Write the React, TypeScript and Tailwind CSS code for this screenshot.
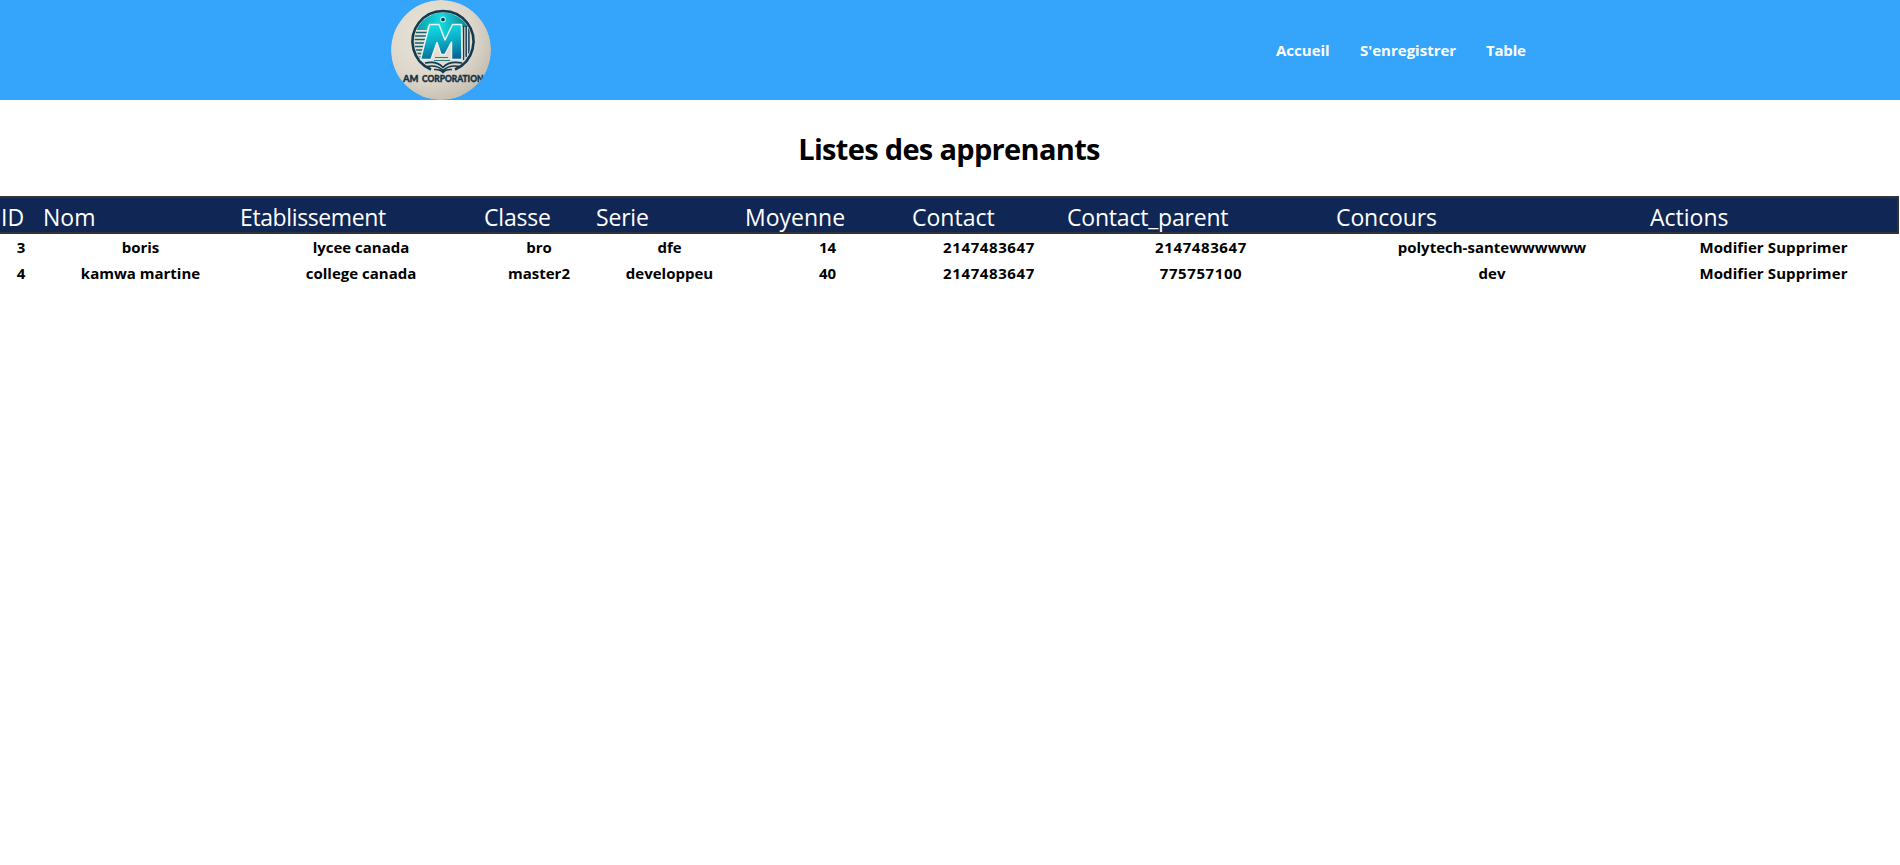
import React from "react";

const columns = [
  { label: "ID", cls: "w-[42px]" },
  { label: "Nom", cls: "w-[197px]" },
  { label: "Etablissement", cls: "w-[244px] tracking-[-0.38px]" },
  { label: "Classe", cls: "w-[112px] tracking-[-0.2px]" },
  { label: "Serie", cls: "w-[149px] tracking-[-0.2px]" },
  { label: "Moyenne", cls: "w-[167px]" },
  { label: "Contact", cls: "w-[155px]" },
  { label: "Contact_parent", cls: "w-[269px] tracking-[-0.2px]" },
  { label: "Concours", cls: "w-[314px] tracking-[-0.1px]" },
  { label: "Actions", cls: "w-[249px]" },
];

const rows = [
  ["3", "boris", "lycee canada", "bro", "dfe", "14", "2147483647", "2147483647", "polytech-santewwwwww"],
  ["4", "kamwa martine", "college canada", "master2", "developpeu", "40", "2147483647", "775757100", "dev"],
];

function Logo() {
  return (
    <svg viewBox="0 0 100 100" className="block size-[100px] rounded-full" role="img" aria-label="AM Corporation">
      <defs>
        <radialGradient id="paper" cx=".38" cy=".35" r=".75">
          <stop offset="0" stopColor="#e9e4da" />
          <stop offset=".6" stopColor="#ddd7cb" />
          <stop offset="1" stopColor="#bdb8a9" />
        </radialGradient>
        <linearGradient id="teal" x1=".3" y1="0" x2=".5" y2="1">
          <stop offset="0" stopColor="#10dfe8" />
          <stop offset=".5" stopColor="#0cacc6" />
          <stop offset="1" stopColor="#0b6694" />
        </linearGradient>
        <linearGradient id="sky" x1="0" y1="0" x2="1" y2="0">
          <stop offset="0" stopColor="#0c97a3" />
          <stop offset=".5" stopColor="#14d9e0" />
          <stop offset="1" stopColor="#0a7d90" />
        </linearGradient>
        <clipPath id="disc"><circle cx="52" cy="41" r="28.500" /></clipPath>
      </defs>
      <circle cx="50" cy="50" r="50" fill="url(#paper)" />
      <g clipPath="url(#disc)">
        <path d="M22 30Q32 12 52 12Q72 12 78 27H66L54 41L47 27L37 26L36 30Z" fill="url(#sky)" />
        <path d="M22 32.500h14M22 36h13.500M22 39.500h12.500M22 43h12M23 46.500h10.500M24 50h9M25 53.500h7M27 57h4" stroke="#17606f" strokeWidth="1.4" />
        <path d="M72.500 26v34M75.200 26v31M77.900 28v26" stroke="#153d52" strokeWidth="1.5" />
      </g>
      <path d="M40 69.500A30.500 30.500 0 1 1 64 69.500" fill="none" stroke="#123a50" strokeWidth="2.600" />
      <path d="M29.500 59.500L38.500 24.500H48L54 40L61.500 24.500H70.500L71 59.500H60.500V42L54 54.500H50L46 42.500L40 59.500Z" fill="url(#teal)" stroke="#e9f2ed" strokeWidth="1.500" strokeLinejoin="round" />
      <path d="M44 57.500h13M43 60.500h16" stroke="#277d8c" strokeWidth="1.1" />
      <circle cx="52" cy="19.500" r="2.400" fill="#123a50" stroke="#b9eceb" strokeWidth="1.100" />
      <path d="M34 63Q46 60.500 52 67.500Q58 60.500 71 63M36 66.500Q46 64.500 52 70.500Q58 64.500 69 66.500M43 69.500Q49 69 52 72.500Q55 69 61 69.500" fill="none" stroke="#123a50" strokeWidth="1.600" />
      <text x="12" y="81.500" textLength="15.500" lengthAdjust="spacingAndGlyphs" className="fill-[#123046] stroke-[#123046] stroke-[0.4px] font-['Lato'] text-[10px] font-black">AM</text>
      <text x="31" y="81.500" textLength="61.500" lengthAdjust="spacingAndGlyphs" className="fill-[#123046] stroke-[#123046] stroke-[0.35px] font-['Lato'] text-[8.7px] font-black">CORPORATION</text>
    </svg>
  );
}

export default function App() {
  return (
    <div className="min-h-[865px] overflow-hidden bg-white font-['Open_Sans','Noto_Sans',sans-serif] text-black">
      <header className="flex h-[100px] items-center bg-[#35a5fb] pl-[391px]">
        <Logo />
        <nav className="ml-[785px] flex gap-[30px] text-[15px] font-bold leading-5 text-white">
          <a className="w-[54px] whitespace-nowrap">Accueil</a>
          <a className="w-[96px] whitespace-nowrap">S'enregistrer</a>
          <a className="whitespace-nowrap tracking-[-0.2px]">Table</a>
        </nav>
      </header>
      <h1 className="mt-[29px] h-[67px] pr-[2px] text-center text-[29px] font-bold leading-10 tracking-[-0.68px]">Listes des apprenants</h1>
      <table className="w-[1898px] table-fixed border-collapse">
        <thead>
          <tr className="h-[36px] border-2 border-l-0 border-[#333333] bg-[#102654] text-white">
            {columns.map((c) => (
              <td key={c.label} className={`${c.cls} px-px pt-[4px] pb-0 text-[23px] leading-[30px] whitespace-nowrap`}>{c.label}</td>
            ))}
          </tr>
        </thead>
        <tbody>
          {rows.map((r) => (
            <tr key={r[0]} className="h-[26px] text-[15px] font-bold leading-6">
              {r.map((t, i) => (
                <th key={i} className={`p-px text-center whitespace-nowrap ${t.length > 8 && /^\d+$/.test(t) ? "pl-[2px] tracking-[0.6px]" : ""}`}>{t}</th>
              ))}
              <th className="p-px text-center whitespace-nowrap tracking-[0.1px]"><a>Modifier</a> <a>Supprimer</a></th>
            </tr>
          ))}
        </tbody>
      </table>
    </div>
  );
}
